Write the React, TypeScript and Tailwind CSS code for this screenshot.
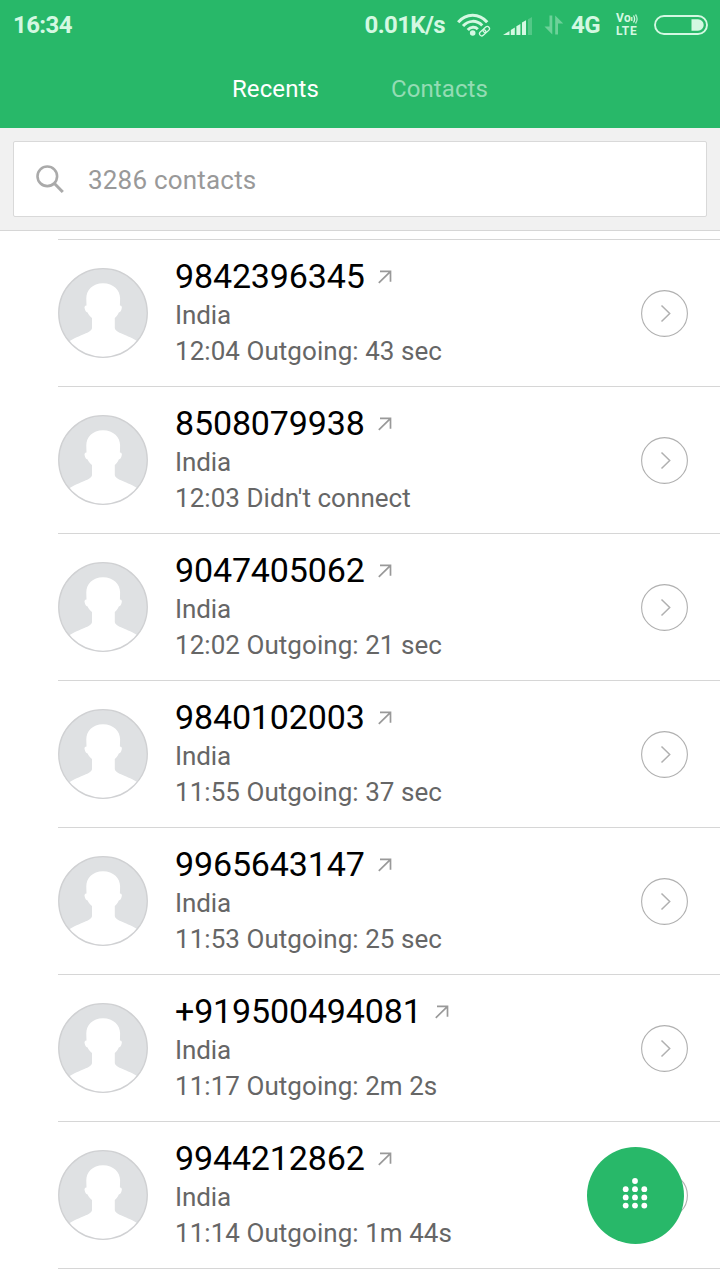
interface Call {
  number: string
  place: string
  detail: string
}

const calls: Call[] = [
  { number: '9842396345', place: 'India', detail: '12:04 Outgoing: 43 sec' },
  { number: '8508079938', place: 'India', detail: "12:03 Didn't connect" },
  { number: '9047405062', place: 'India', detail: '12:02 Outgoing: 21 sec' },
  { number: '9840102003', place: 'India', detail: '11:55 Outgoing: 37 sec' },
  { number: '9965643147', place: 'India', detail: '11:53 Outgoing: 25 sec' },
  { number: '+919500494081', place: 'India', detail: '11:17 Outgoing: 2m 2s' },
  { number: '9944212862', place: 'India', detail: '11:14 Outgoing: 1m 44s' },
]

const WifiIcon = () => (
  <svg viewBox="0 0 34 24" className="w-[34px] h-6" fill="none" stroke="currentColor" strokeWidth="3">
    <path d="M1.2 9.2C9 -.2 22.300 -.2 30.200 9.200" />
    <path d="M6 13.100c5.400-6.200 13.800-6.200 19.200-.6" />
    <path d="M10.800 17c2.800-3.400 7.400-3.400 10-.8" />
    <circle cx="15.700" cy="20" r="2.800" fill="currentColor" stroke="none" />
    <g strokeWidth="1.300" transform="rotate(-42 27.500 18.200)">
      <rect x="21.600" y="16" width="7" height="4.400" rx="2.200" />
      <rect x="26.400" y="16" width="7" height="4.400" rx="2.200" />
    </g>
  </svg>
)

const SignalIcon = () => (
  <svg viewBox="0 0 30 18" className="w-[30px] h-[18px]" fill="currentColor">
    <path d="M0 18l6.500-4v4z" />
    <path d="M7.800 13l4-2.500V18h-4z" />
    <path d="M13.400 9.300l4-2.300v11h-4z" />
    <path d="M19 5.500l4-2.300V18h-4z" />
    <path d="M25 2.200L29 0v18h-4z" opacity=".25" />
  </svg>
)

const DataIcon = () => (
  <svg viewBox="0 0 20 20" className="w-5 h-5 opacity-40" fill="currentColor">
    <path d="M5.500.5h2.800v19L.5 11.500h5z" />
    <path d="M11.200 19.500V.5l8 8h-5.200v11z" />
  </svg>
)

const VolteIcon = () => (
  <div className="w-6 text-xs leading-[13px] font-bold">
    <div className="flex items-center h-[13px]">
      <span className="tracking-[0.4px]">Vo</span>
      <svg viewBox="0 0 7 10" className="w-[7px] h-2.5" fill="none" stroke="currentColor" strokeWidth="1.300">
        <path d="M.8 3v4M2.500 1.500c1.400 2.200 1.400 4.800 0 7" />
        <path d="M4.500 .5c2 2.800 2 6.200 0 9" opacity=".8" />
      </svg>
    </div>
    <div className="tracking-[0.7px]">LTE</div>
  </div>
)

const BatteryIcon = () => (
  <svg viewBox="0 0 54 20" className="w-[54px] h-5">
    <rect x="1" y="1" width="52" height="18" rx="9" fill="none" stroke="currentColor" strokeWidth="1.900" />
    <path d="M37.500 4.300H44a5.700 5.700 0 0 1 0 11.400h-6.500z" fill="currentColor" />
  </svg>
)

const Avatar = () => (
  <svg viewBox="0 0 90 90" className="w-[90px] h-[90px] shrink-0">
    <defs>
      <clipPath id="avatar">
        <circle cx="45" cy="45" r="44.500" />
      </clipPath>
    </defs>
    <circle cx="45" cy="45" r="44.500" fill="#dfe1e3" />
    <path
      clipPath="url(#avatar)"
      fill="#fff"
      d="M45 15.300c-10.500 0-16.700 7-16.700 15.200 0 2.500.2 5 .2 7-2 .2-2.400 1.600-1.600 3.800.6 1.700 1.200 2.900 2.700 3.200 1 2.800 3 4.200 4.400 5.500v10C33.500 65 22 66.500 10 74L14 90h62l5-16C69 66.500 57.500 65 56.800 60V50c1.400-1.300 3-2.700 4-5.500 1.500-.3 2.100-1.500 2.700-3.200.8-2.200.4-3.600-1.600-3.800 0-2 .2-4.500.2-7C62.100 22.300 55.500 15.300 45 15.300z"
    />
    <circle cx="45" cy="45" r="44.300" fill="none" stroke="#d0d1d3" strokeWidth="1.300" />
  </svg>
)

const OutgoingIcon = () => (
  <svg viewBox="0 0 14 14" className="w-3.5 h-3.5" fill="none" stroke="#999" strokeWidth="1.700">
    <path d="M2 1.400h10.500v10.300M12.300 1.600L.800 12.800" />
  </svg>
)

const CallRow = ({ call }: { call: Call }) => (
  <div className="flex h-[147px] ml-[58px] pr-8 pt-4 border-b border-[#d6d6d6]">
    <div className="pt-3">
      <Avatar />
    </div>
    <div className="flex-1 ml-[27px] text-[26px] leading-9 text-[#666]">
      <div className="flex items-center gap-[13px] h-[41px]">
        <span className="h-[41px] text-[34px] leading-10 tracking-[-0.15px] text-black">{call.number}</span>
        <OutgoingIcon />
      </div>
      <div className="h-9 tracking-[-0.1px]">{call.place}</div>
      <div className="tracking-[0.05px]">{call.detail}</div>
    </div>
    <svg viewBox="0 0 47 47" className="w-[47px] h-[47px] mt-[34px]" fill="none" stroke="#b0b0b0">
      <circle cx="23.500" cy="23.500" r="22.900" strokeWidth="1.100" />
      <path d="M20.500 15.500l8.200 8-8.200 8" strokeWidth="1.500" />
    </svg>
  </div>
)

const dots = [
  [17, 5],
  [7.700, 13.200], [17, 13.200], [26.300, 13.200],
  [7.700, 21.400], [17, 21.400], [26.300, 21.400],
  [7.700, 29.600], [17, 29.600], [26.300, 29.600],
]

const App = () => {
  return (
    <div className="relative w-[720px] h-[1280px] overflow-hidden bg-white font-['Roboto',sans-serif]">
      <header className="h-32 bg-[#28b869]">
        {/* Status bar */}
        <div className="flex items-center h-[50px] pl-[13px] pr-3 text-2xl font-bold tracking-[-0.6px] text-[#d4f8e2]">
          <span>16:34</span>
          <div className="flex flex-1 items-center justify-end">
            <span className="mr-3">0.01K/s</span>
            <WifiIcon />
            <div className="ml-3 mt-0.5">
              <SignalIcon />
            </div>
            <div className="ml-[11px] mr-[7px]">
              <DataIcon />
            </div>
            <span className="mr-4">4G</span>
            <VolteIcon />
            <div className="ml-3.5">
              <BatteryIcon />
            </div>
          </div>
        </div>
        {/* Tabs */}
        <nav className="flex justify-center gap-[72px] h-[78px] pt-[23px] text-2xl leading-8 tracking-[0.1px]">
          <span className="text-white">Recents</span>
          <span className="text-[#94dcb4]">Contacts</span>
        </nav>
      </header>

      {/* Search */}
      <div className="h-[103px] p-[13px] bg-[#f1f1f1] border-b border-[#d6d6d6]">
        <div className="flex items-center h-[76px] pl-[22px] bg-white border border-[#d9d9d9] rounded-xs">
          <svg viewBox="0 0 28 28" className="w-7 h-7" fill="none" stroke="#aaa" strokeWidth="2.600">
            <circle cx="11.300" cy="11.300" r="9.800" />
            <path d="M18.200 18.200l8.600 8.800" strokeWidth="3" />
          </svg>
          <span className="ml-6 pt-0.5 text-[26px] leading-9 tracking-[0.2px] text-[#999]">3286 contacts</span>
        </div>
      </div>

      {/* Call log */}
      <div className="h-[9px] ml-[58px] border-b border-[#d6d6d6]" />
      {calls.map((call) => (
        <CallRow key={call.number} call={call} />
      ))}

      <button className="absolute left-[587px] top-[1147px] flex items-center justify-center w-[97px] h-[97px] pr-px pb-1.5 rounded-full bg-[#28b869]">
        <svg viewBox="0 0 34 34" className="w-[34px] h-[34px]" fill="#fff">
          {dots.map(([cx, cy]) => (
            <circle key={`${cx}-${cy}`} cx={cx} cy={cy} r="2.900" />
          ))}
        </svg>
      </button>
    </div>
  )
}

export default App
